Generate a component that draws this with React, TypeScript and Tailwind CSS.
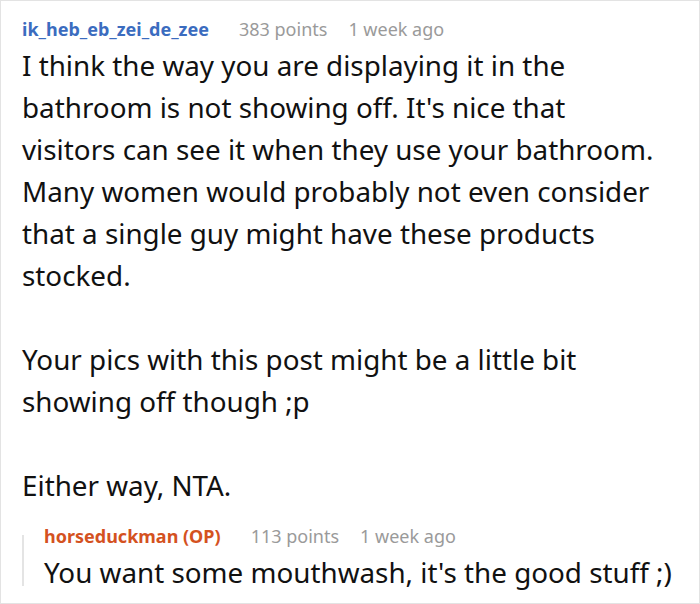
const body = [
  "I think the way you are displaying it in the bathroom is not showing off. It's nice that visitors can see it when they use your bathroom. Many women would probably not even consider that a single guy might have these products stocked.",
  "Your pics with this post might be a little bit showing off though ;p",
  "Either way, NTA.",
];

export default function App() {
  return (
    <div className="h-[604px] w-[700px] overflow-hidden border border-[#e3e3e3] bg-white font-['Noto_Sans',sans-serif] text-[#111]">
      <div className="pl-[21px] pr-[38px] pt-[13px]">
        <div className="flex items-baseline text-[18px] leading-[30px]">
          <span className="font-bold text-[#3b6cbf]">ik_heb_eb_zei_de_zee</span>
          <span className="ml-[30px] text-[#9a9a9a]">383 points</span>
          <span className="ml-[21px] text-[#9a9a9a]">1 week ago</span>
        </div>
        <div className="text-[27.8px] leading-[42px]">
          {body.map((p, i) => (
            <p key={i} className={i > 0 ? "mt-[42px]" : ""}>
              {p}
            </p>
          ))}
        </div>
      </div>

      <div className="ml-[21px] mt-[15px] flex">
        <div className="mt-[14px] h-[51px] w-[2px] bg-[#e4e4e4]" />
        <div className="ml-[20px]">
          <div className="flex items-baseline text-[18px] leading-[30px]">
            <span className="font-bold text-[#d4521f]">horseduckman (OP)</span>
            <span className="ml-[30px] text-[#9a9a9a]">113 points</span>
            <span className="ml-[21px] text-[#9a9a9a]">1 week ago</span>
          </div>
          <p className="whitespace-nowrap text-[27.8px] leading-[42px]">
            You want some mouthwash, it's the good stuff ;)
          </p>
        </div>
      </div>
    </div>
  );
}
